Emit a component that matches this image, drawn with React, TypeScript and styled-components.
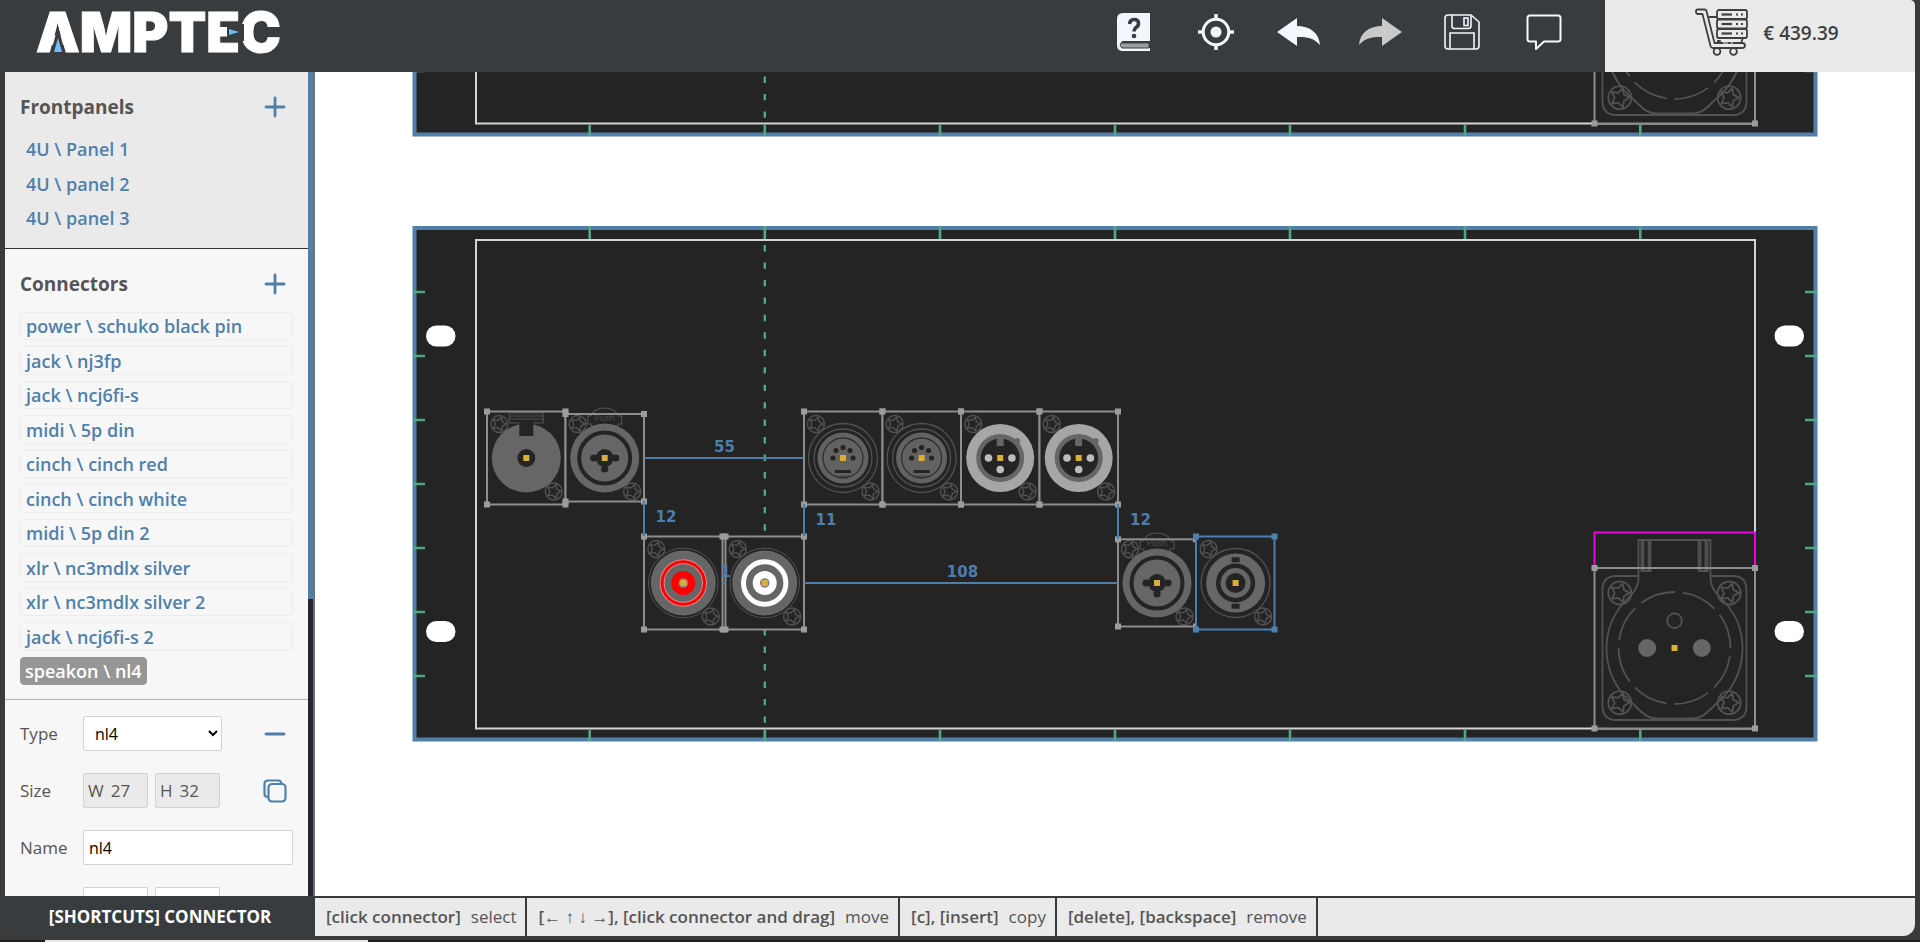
import React from 'react';
import styled, { createGlobalStyle, css } from 'styled-components';

const color = {
  chrome: '#393c3f',
  frame: '#3b3b3b',
  grey: '#eaeaea',
  pale: '#f7f7f7',
  blue: '#5080aa',
  text: '#555555',
  panel: '#242424',
  metal: '#666666',
  line: '#525252',
  green: '#4fa783',
  box: '#8e8e8e',
  handle: '#9a9da0',
  measure: '#4c7ead',
};

const GlobalStyle = createGlobalStyle`
  * { box-sizing: border-box; }
  body {
    margin: 0;
    background: ${color.frame};
    color: ${color.text};
    font-family: "Open Sans", "Noto Sans", sans-serif;
    font-size: 16px;
  }
  button, input, select { font: inherit; color: inherit; }
  button { border: 0; padding: 0; background: none; cursor: pointer; }
`;

const Shell = styled.div`
  height: 100vh;
  display: flex;
  flex-direction: column;
`;

const Window = styled.div`
  flex: 1;
  min-height: 0;
  display: flex;
  flex-direction: column;
  margin: 0 5px 4px;
  border-radius: 0 5px 12px 12px;
  overflow: hidden;
  background: ${color.chrome};
`;

const Header = styled.header`
  flex: none;
  height: 72px;
  display: flex;
  align-items: stretch;
`;

const LogoLink = styled.a`
  padding-left: 31px;
  display: block;
  margin-right: auto;
`;

const Toolbar = styled.nav`
  display: flex;
  padding-right: 20px;
`;

const ToolButton = styled.button<{ $dim?: boolean }>`
  width: 82px;
  height: 64px;
  display: flex;
  align-items: center;
  justify-content: center;
  color: ${p => (p.$dim ? '#c9c9c9' : '#f1f7fd')};
`;

const CartButton = styled.button`
  width: 310px;
  display: flex;
  align-items: flex-start;
  justify-content: center;
  gap: 14px;
  padding: 8px 0 0 14px;
  background: ${color.grey};
  color: #3d3f41;
`;

const Price = styled.span`
  font-size: 19px;
  line-height: 50px;
  font-weight: 600;
`;

const Body = styled.div`
  flex: 1;
  min-height: 0;
  display: flex;
`;

const Sidebar = styled.aside`
  flex: none;
  width: 310px;
  display: flex;
  overflow: hidden;
`;

const SidebarContent = styled.div`
  flex: 1;
  overflow: hidden;
  background: ${color.pale};
`;

const ScrollTrack = styled.div`
  width: 7px;
  background: #24282b;
  border-right: 2px solid #69747e;
`;

const ScrollThumb = styled.div`
  height: 64%;
  background: ${color.blue};
`;

const Section = styled.section<{ $shaded?: boolean }>`
  padding: 17px 15px 16px;
  ${p => p.$shaded
    ? css`background: ${color.grey}; border-bottom: 1px solid #333;`
    : css`padding-bottom: 14px; border-bottom: 1px solid #b4b4b4;`}
`;

const SectionHead = styled.div`
  height: 36px;
  margin-bottom: 10px;
  padding-right: 6px;
  display: flex;
  align-items: center;
  justify-content: space-between;
`;

const SectionTitle = styled.h2`
  margin: 0;
  font-size: 19px;
  font-weight: 700;
`;

const IconButton = styled.button`
  width: 24px;
  height: 24px;
  display: flex;
  align-items: center;
  justify-content: center;
  color: ${color.blue};
`;

const ItemList = styled.ul`
  margin: 0;
  padding: 0;
  list-style: none;
  display: flex;
  flex-direction: column;
  gap: 6px;
`;

const Item = styled.li`
  display: flex;
  min-height: 28px;
  &:nth-child(even) { min-height: 29px; }
`;

const ItemLink = styled.a<{ $boxed?: boolean; $active?: boolean }>`
  flex: 1;
  display: flex;
  align-items: center;
  padding: 0 5px;
  border: 1px solid ${p => (p.$boxed ? '#ececec' : 'transparent')};
  border-radius: 4px;
  color: ${color.blue};
  font-size: 18px;
  line-height: 24px;
  font-weight: 600;
  text-decoration: none;
  white-space: nowrap;
  ${p => p.$active && css`
    flex: none;
    padding: 0 4px;
    background: #969696;
    border-color: #969696;
    color: #fff;
  `}
`;

const Form = styled.form`
  padding: 16px 15px;
  display: flex;
  flex-direction: column;
  gap: 22px;
`;

const FormRow = styled.div`
  height: 35px;
  display: flex;
  align-items: center;
  padding-right: 6px;
`;

const Label = styled.label`
  width: 63px;
  flex: none;
  font-size: 17px;
`;

const Select = styled.select`
  width: 139px;
  height: 35px;
  padding: 0 0 0 7px;
  border: 1px solid #d2d2d2;
  border-radius: 2px;
  background: #fff;
  color: #000;
`;

const NameInput = styled.input`
  flex: 1;
  min-width: 0;
  height: 35px;
  margin-right: -6px;
  padding: 0 5px;
  border: 1px solid #d2d2d2;
  border-radius: 2px;
  color: #000;
`;

const Pair = styled.div`
  display: flex;
  gap: 7px;
`;

const SizeField = styled.label<{ $editable?: boolean }>`
  width: 65px;
  height: 35px;
  display: flex;
  align-items: center;
  padding: 0 4px;
  gap: 7px;
  border: 1px solid #d2d2d2;
  border-radius: 2px;
  background: ${p => (p.$editable ? '#fff' : color.grey)};
  font-size: 17px;
`;

const SizeInput = styled.input`
  flex: 1;
  min-width: 0;
  width: 100%;
  padding: 0;
  border: 0;
  background: none;
`;

const RowEnd = styled.div`
  margin-left: auto;
`;

const Canvas = styled.main`
  flex: 1;
  min-width: 0;
  overflow: hidden;
  display: flex;
  flex-direction: column;
  justify-content: flex-end;
  gap: 89px;
  padding: 0 97px 154px;
  background: #fff;
`;

const PanelSvg = styled.svg`
  display: block;
  flex: none;
  width: 100%;
  height: auto;
`;

const Footer = styled.footer`
  flex: none;
  height: 40px;
  display: flex;
`;

const FooterTitle = styled.div`
  flex: none;
  width: 310px;
  display: flex;
  align-items: center;
  justify-content: center;
  color: #fff;
  font-size: 17px;
  font-weight: 700;
`;

const ShortcutBar = styled.div`
  flex: 1;
  display: flex;
  border-top: 2px solid ${color.frame};
  background: ${color.grey};
`;

const Shortcut = styled.div`
  display: flex;
  align-items: center;
  gap: 10px;
  padding: 0 9px 2px 11px;
  border-right: 2px solid ${color.frame};
  white-space: nowrap;
  font-size: 17px;
`;

const Keys = styled.strong`
  font-weight: 600;
`;

const Taskbar = styled.div`
  flex: none;
  height: 2px;
  display: flex;
  padding-left: 45px;
  background: #1f1f1f;
`;

const ActiveTask = styled.div`
  width: 323px;
  background: #e6e6e6;
`;

function Logo() {
  return (
    <svg width="260" height="72" viewBox="0 0 260 72" role="img" aria-label="Amptec">
      <text x="0" y="52" fontFamily="Inter, sans-serif" fontSize="55" fontWeight="900" fill="#fff" stroke="#fff" strokeWidth="1">AMPTEC</text>
      <path d="M14.500 54 L22 26 L29.500 54Z" fill={color.chrome} />
      <path d="M18 52 L22 38 L26 52Z" fill="#6fbdf5" />
      <path d="M191 24H208V41H191Z" fill={color.chrome} />
      <path d="M193 29 L203 32 L193 35Z" fill="#6fbdf5" />
    </svg>
  );
}

const BookIcon = () => (
  <svg width="34" height="38" viewBox="0 0 34 38">
    <path d="M6 0H33V28H6C3 28 3 35 6 35H33V38H6Q0 38 0 32V6Q0 0 6 0Z" fill="currentColor" />
    <path d="M4 30H32V35H5Q2 32.500 4 30Z" fill="#9aa0a4" stroke={color.chrome} />
    <path d="M12.500 11 Q13 6.500 17 6.500 Q21.500 6.500 21.500 10.500 Q21.500 13 19 14.500 Q17 16 17 18.500" fill="none" stroke={color.chrome} strokeWidth="3.600" />
    <circle cx="17" cy="23" r="2.300" fill={color.chrome} />
  </svg>
);

const TargetIcon = () => (
  <svg width="36" height="36" viewBox="0 0 36 36" fill="none" stroke="currentColor">
    <circle cx="18" cy="18" r="12.800" strokeWidth="3" />
    <circle cx="18" cy="18" r="5.500" fill="currentColor" stroke="none" />
    <path d="M18 0V6M18 30V36M0 18H6M30 18H36" strokeWidth="3.500" />
  </svg>
);

const ArrowIcon = ({ flip }: { flip?: boolean }) => (
  <svg width="43" height="28" viewBox="0 0 43 28">
    <path transform={flip ? 'matrix(-1 0 0 1 43 0)' : undefined}
      d="M0 14 L20 0 V8 C32 8 42 14 43 27 C37 20 30 18.500 20 19 V28Z" fill="currentColor" />
  </svg>
);

const FloppyIcon = () => (
  <svg width="36" height="36" viewBox="0 0 36 36" fill="none" stroke="currentColor" strokeWidth="1.600">
    <path d="M4 1H27L35 8V32Q35 35 32 35H4Q1 35 1 32V4Q1 1 4 1Z" />
    <path d="M8 1V12Q8 14.500 10.500 14.500H24Q27 14.500 27 12V1M6 35V19H30V35" />
    <rect x="20" y="4" width="4" height="7.500" />
  </svg>
);

const ChatIcon = () => (
  <svg width="36" height="36" viewBox="0 0 36 36" fill="none" stroke="currentColor" strokeWidth="2" strokeLinejoin="round">
    <path d="M4 1.500H32Q34.500 1.500 34.500 4V25Q34.500 27.500 32 27.500H18L10 35V27.500H4Q1.500 27.500 1.500 25V4Q1.500 1.500 4 1.500Z" />
  </svg>
);

const CartIcon = () => (
  <svg width="54" height="48" viewBox="0 0 54 48" fill="none" stroke="currentColor" strokeWidth="1.800" strokeLinejoin="round">
    <path d="M2.500 1.500H9.500Q11 1.500 11.500 3L19.500 35H47Q50 35 50 37.500Q50 40 47 40H18Q16 40 15.500 38L7.500 6H3Q1 6 1 3.800Q1 1.500 2.500 1.500Z" />
    <path d="M13 9H22M46 35L48 30M25 35V33H22" />
    {[2, 11.5, 21].map(y => (
      <g key={y}>
        <rect x="22" y={y} width="30" height="9" rx="2" />
        <path d={`M26.500 ${y + 4.5}H37`} strokeWidth="2.200" />
        <path d={`M41 ${y + 4.5}h2M46 ${y + 4.5}h2`} strokeWidth="2.200" />
      </g>
    ))}
    <path d="M28 35H33M35.500 35H38" stroke="#eaeaea" strokeWidth="1" />
    <circle cx="22" cy="43.500" r="3.400" />
    <circle cx="38.500" cy="43.500" r="3.400" />
  </svg>
);

const PlusIcon = () => (
  <svg width="22" height="22" viewBox="0 0 22 22" stroke="currentColor" strokeWidth="2.800" strokeLinecap="round">
    <path d="M2 11H20M11 2V20" />
  </svg>
);

const MinusIcon = () => (
  <svg width="22" height="22" viewBox="0 0 22 22" stroke="currentColor" strokeWidth="2.800" strokeLinecap="round">
    <path d="M2 11H20" />
  </svg>
);

const CopyIcon = () => (
  <svg width="24" height="24" viewBox="0 0 24 24" fill="none" stroke="currentColor" strokeWidth="2.200">
    <rect x="5.500" y="5" width="17" height="17.500" rx="3.500" />
    <path d="M5 18C2.500 18 1.500 17 1.500 15V5Q1.500 1.500 5 1.500H15Q18 1.500 18.500 4.500" />
  </svg>
);

/* Drawing of the rack panels, in canvas units */

const starPath = (r: number) => {
  const pts: string[] = [];
  for (let i = 0; i < 10; i++) {
    const radius = i % 2 ? r * 0.45 : r * 0.86;
    const a = (Math.PI / 5) * i - Math.PI / 2 + 0.3;
    pts.push(`${(Math.cos(a) * radius).toFixed(2)},${(Math.sin(a) * radius).toFixed(2)}`);
  }
  return `M${pts.join('L')}Z`;
};

const Screw = ({ x, y, r = 8.5 }: { x: number; y: number; r?: number }) => (
  <g transform={`translate(${x} ${y})`} fill="none" stroke={color.line} strokeWidth={r > 10 ? 1.8 : 1.4} strokeLinejoin="round">
    <circle r={r} />
    <path d={starPath(r)} />
  </g>
);

const Centre = () => <rect x={-3} y={-3} width={6} height={6} fill="#d9af38" />;

const JackNj = () => (
  <g>
    <path d="M-17 -45H17V-35H-17ZM-17 -42H17M-17 -39H17" fill="none" stroke={color.line} />
    <circle r={34.5} fill={color.metal} />
    <rect x={-7} y={-37} width={14} height={15} fill={color.panel} />
    <circle r={9} fill={color.panel} />
  </g>
);

const JackCombo = () => (
  <g>
    <path d="M-13 -31V-34H-17V-42H-14Q-10 -50 0 -50Q10 -50 14 -42H17V-34H13V-31" fill={color.panel} stroke={color.line} strokeWidth={1.2} />
    <text y={-37.5} textAnchor="middle" fontSize={9} fontFamily="Open Sans, sans-serif" fill={color.line}>Push</text>
    <circle r={34.5} fill={color.metal} />
    <circle r={25.5} fill="none" stroke={color.panel} strokeWidth={4} />
    <circle r={9} fill={color.panel} />
    <circle cx={-11} r={3.6} fill={color.panel} />
    <circle cx={11} r={3.6} fill={color.panel} />
    <circle cy={11} r={3.6} fill={color.panel} />
  </g>
);

const Midi = () => (
  <g>
    <circle r={34.5} fill="none" stroke={color.line} strokeWidth={1.3} />
    <circle r={29} fill="none" stroke={color.line} strokeWidth={1.3} />
    <circle r={25.5} fill="#626262" />
    <circle r={20} fill="none" stroke="#2d2d2d" strokeWidth={1.3} />
    {[[-10, 0], [10, 0], [-7, -7.5], [7, -7.5], [0, -10.5]].map(([x, y]) => (
      <circle key={`${x}${y}`} cx={x} cy={y} r={2.6} fill={color.panel} />
    ))}
    <path d="M-8 13.500H8" stroke={color.panel} strokeWidth={3} />
    <path d="M-8 18H-5Q-4 19 0 18Q4 19 5 18H8" fill="none" stroke="#3a3a3a" />
  </g>
);

const Xlr = () => (
  <g>
    <circle r={34} fill="#a6a6a6" />
    <circle r={24} fill={color.metal} />
    <circle cx={17} cy={-17} r={3} fill={color.metal} />
    <circle r={19.5} fill={color.panel} />
    <rect x={-3.5} y={-21} width={7} height={9} fill={color.metal} />
    {[[-11.7, 0], [11.7, 0], [0, 11.5]].map(([x, y]) => (
      <circle key={x} cx={x} cy={y} r={3.8} fill="#bdbdbd" />
    ))}
  </g>
);

const Cinch = ({ tone }: { tone: 'red' | 'white' }) => (
  <g>
    <circle r={34.8} fill="none" stroke={color.line} />
    <circle r={32.5} fill={color.metal} />
    {tone === 'red' && <circle r={21.2} fill="none" stroke="#d98b8b" strokeWidth={5} />}
    <circle r={21.2} fill="none" stroke={tone === 'red' ? '#ff0000' : '#fff'} strokeWidth={tone === 'red' ? 3 : 5} />
    <circle r={12} fill={tone === 'red' ? '#ff0000' : '#fff'} />
    <circle r={4.8} fill="#858585" />
  </g>
);

const Speakon = () => (
  <g>
    <circle r={34.5} fill="none" stroke={color.line} strokeWidth={1.3} />
    <circle r={29.5} fill="#676767" />
    <circle r={19.6} fill={color.panel} />
    <circle r={15} fill={color.metal} />
    <circle r={10} fill={color.panel} />
    <path d="M-4 -23.300H4M-4 23.300H4" stroke={color.panel} strokeWidth={5} />
  </g>
);

const Schuko = () => (
  <g fill="none" stroke={color.line} strokeWidth={1.8}>
    <path d="M-36 -72H-58Q-72 -72 -72 -58V58Q-72 72 -58 72H58Q72 72 72 58V-58Q72 -72 58 -72H36" />
    <path d="M-36 -70V-108H36V-70C36 -60 42 -54 50 -46C74 -20 74 20 50 48L33 64Q26 70.500 18 70.500H-18Q-26 70.500 -33 64L-50 48C-74 20 -74 -20 -50 -46C-42 -54 -36 -60 -36 -70" />
    <path d="M-33 -108V-77H-24V-108M-31 -108V-77M-26 -108V-77M33 -108V-77H24V-108M31 -108V-77M26 -108V-77" />
    <circle r={56} strokeDasharray="36 7.980" strokeDashoffset={36} />
    <circle cy={-27.3} r={7.3} />
    <circle cx={-27.3} r={9} fill={color.metal} stroke="none" />
    <circle cx={27.3} r={9} fill={color.metal} stroke="none" />
    {[-54.7, 54.7].map(x => [-55, 54.7].map(y => <Screw key={`${x}${y}`} x={x} y={y} r={11.5} />))}
  </g>
);

type Device = {
  id: string;
  box: [number, number, number, number];
  at: [number, number];
  art: React.ReactNode;
  selected?: boolean;
  plain?: boolean;
};

const schuko: Device = { id: 'schuko', box: [1594.5, 568, 1755, 728.5], at: [1674.5, 648], art: <Schuko />, plain: true };

const devices: Device[] = [
  { id: 'nj3fp', box: [487, 411.5, 565.5, 504.5], at: [526.3, 458], art: <JackNj /> },
  { id: 'ncj6', box: [565.5, 414, 644, 501.5], at: [604.7, 458], art: <JackCombo /> },
  { id: 'midi', box: [804, 411.5, 882.5, 504.5], at: [843, 458], art: <Midi /> },
  { id: 'midi2', box: [882.5, 411.5, 961, 504.5], at: [921.6, 458], art: <Midi /> },
  { id: 'xlr', box: [961, 411.5, 1039.5, 504.5], at: [1000.2, 458], art: <Xlr /> },
  { id: 'xlr2', box: [1039.5, 411.5, 1118, 504.5], at: [1078.7, 458], art: <Xlr /> },
  { id: 'cinch', box: [644, 536.5, 722.5, 629.5], at: [683.3, 583], art: <Cinch tone="red" /> },
  { id: 'cinch2', box: [725.5, 536.5, 804, 629.5], at: [764.7, 583], art: <Cinch tone="white" /> },
  { id: 'ncj62', box: [1118, 539.3, 1196, 626.5], at: [1157, 583], art: <JackCombo /> },
  { id: 'nl4', box: [1196, 536.5, 1274.5, 629.5], at: [1235.6, 583], art: <Speakon />, selected: true },
  schuko,
];

function DeviceShape({ device }: { device: Device }) {
  const [l, t, r, b] = device.box;
  const edge = device.selected ? color.measure : color.box;
  return (
    <g>
      <rect x={l} y={t} width={r - l} height={b - t} fill={color.panel} />
      {device.plain && <path d={`M${l} ${t}V532.500H${r}V${t}`} fill="none" stroke="#f000e0" strokeWidth={2} />}
      <g transform={`translate(${device.at[0]} ${device.at[1]})`}>
        {!device.plain && <><Screw x={-27} y={-34} /><Screw x={27.5} y={33.5} /></>}
        {device.art}
        <Centre />
      </g>
      <rect x={l} y={t} width={r - l} height={b - t} fill="none" stroke={edge} strokeWidth={2} />
      {[l, r].map(x => [t, b].map(y => (
        <rect key={`${x}-${y}`} x={x - 3} y={y - 3} width={6} height={6} fill={device.selected ? color.blue : color.handle} />
      )))}
    </g>
  );
}

const measures: { path: string; label: string; x: number; y: number }[] = [
  { path: 'M644 458H804', label: '55', x: 724.5, y: 452 },
  { path: 'M644 501V536', label: '12', x: 666, y: 522 },
  { path: 'M804 504V536', label: '11', x: 826, y: 525 },
  { path: 'M804 583H1118', label: '108', x: 962.5, y: 577 },
  { path: 'M1118 504V539', label: '12', x: 1140.5, y: 525 },
  { path: 'M722 583H726', label: '1', x: 725.5, y: 577 },
];

const columns = [589.7, 764.8, 940, 1115, 1290, 1465, 1640.3];
const rows = [292, 356, 420, 484, 548, 612, 676];

function Panel({ items, showMeasures, label }: { items: Device[]; showMeasures?: boolean; label: string }) {
  return (
    <PanelSvg viewBox="412 226 1406 516" role="img" aria-label={label}>
      <rect x={414.5} y={228} width={1401} height={511.5} fill={color.panel} stroke={color.blue} strokeWidth={4} />
      {[426, 1774.5].map(x => [325.5, 621].map(y => (
        <rect key={`${x}-${y}`} x={x} y={y} width={29.5} height={21} rx={10.5} fill="#fff" />
      )))}
      <path d={columns.map(x => `M${x} 226V239M${x} 730V741`).join('')} stroke={color.green} strokeWidth={2.6} />
      <path d={rows.map(y => `M413 ${y}H425M1805 ${y}H1817`).join('')} stroke={color.green} strokeWidth={2.6} />
      <rect x={476} y={240} width={1279} height={488.5} fill="none" stroke="#d6d3d3" strokeWidth={2} />
      <path d="M764.800 245V730" stroke={color.green} strokeWidth={2.4} strokeDasharray="6.400 11.060" />
      {items.map(d => <DeviceShape key={d.id} device={d} />)}
      {showMeasures && measures.map(m => (
        <g key={m.path}>
          <path d={m.path} stroke={color.measure} strokeWidth={2} />
          <text x={m.x} y={m.y} textAnchor="middle" fill={color.measure} fontFamily="DejaVu Sans, sans-serif" fontSize={15} fontWeight={700}>{m.label}</text>
        </g>
      ))}
    </PanelSvg>
  );
}

const frontpanels = ['4U \\ Panel 1', '4U \\ panel 2', '4U \\ panel 3'];
const connectors = [
  'power \\ schuko black pin', 'jack \\ nj3fp', 'jack \\ ncj6fi-s', 'midi \\ 5p din',
  'cinch \\ cinch red', 'cinch \\ cinch white', 'midi \\ 5p din 2', 'xlr \\ nc3mdlx silver',
  'xlr \\ nc3mdlx silver 2', 'jack \\ ncj6fi-s 2', 'speakon \\ nl4',
];
const shortcuts = [
  ['[click connector]', 'select'],
  ['[← ↑ ↓ →], [click connector and drag]', 'move'],
  ['[c], [insert]', 'copy'],
  ['[delete], [backspace]', 'remove'],
];

export default function App() {
  return (
    <Shell>
      <GlobalStyle />
      <Window>
        <Header>
          <LogoLink href="#home"><Logo /></LogoLink>
          <Toolbar aria-label="Tools">
            <ToolButton aria-label="Manual"><BookIcon /></ToolButton>
            <ToolButton aria-label="Centre view"><TargetIcon /></ToolButton>
            <ToolButton aria-label="Undo"><ArrowIcon /></ToolButton>
            <ToolButton aria-label="Redo" $dim><ArrowIcon flip /></ToolButton>
            <ToolButton aria-label="Save"><FloppyIcon /></ToolButton>
            <ToolButton aria-label="Comment"><ChatIcon /></ToolButton>
          </Toolbar>
          <CartButton><CartIcon /><Price>€ 439.39</Price></CartButton>
        </Header>
        <Body>
          <Sidebar>
            <SidebarContent>
              <Section $shaded>
                <SectionHead>
                  <SectionTitle>Frontpanels</SectionTitle>
                  <IconButton aria-label="Add frontpanel"><PlusIcon /></IconButton>
                </SectionHead>
                <ItemList>
                  {frontpanels.map(name => (
                    <Item key={name}><ItemLink href="#panel">{name}</ItemLink></Item>
                  ))}
                </ItemList>
              </Section>
              <Section>
                <SectionHead>
                  <SectionTitle>Connectors</SectionTitle>
                  <IconButton aria-label="Add connector"><PlusIcon /></IconButton>
                </SectionHead>
                <ItemList>
                  {connectors.map((name, i) => (
                    <Item key={name}>
                      <ItemLink href="#connector" $boxed $active={i === connectors.length - 1}>{name}</ItemLink>
                    </Item>
                  ))}
                </ItemList>
              </Section>
              <Form>
                <FormRow>
                  <Label htmlFor="type">Type</Label>
                  <Select id="type" defaultValue="nl4"><option>nl4</option></Select>
                  <RowEnd><IconButton type="button" aria-label="Remove connector"><MinusIcon /></IconButton></RowEnd>
                </FormRow>
                <FormRow>
                  <Label as="span">Size</Label>
                  <Pair>
                    <SizeField>W <SizeInput defaultValue="27" readOnly /></SizeField>
                    <SizeField>H <SizeInput defaultValue="32" readOnly /></SizeField>
                  </Pair>
                  <RowEnd><IconButton type="button" aria-label="Copy connector"><CopyIcon /></IconButton></RowEnd>
                </FormRow>
                <FormRow>
                  <Label htmlFor="name">Name</Label>
                  <NameInput id="name" defaultValue="nl4" />
                </FormRow>
                <FormRow>
                  <Label as="span">Place</Label>
                  <Pair>
                    <SizeField $editable><SizeInput aria-label="Horizontal place" /></SizeField>
                    <SizeField $editable><SizeInput aria-label="Vertical place" /></SizeField>
                  </Pair>
                </FormRow>
              </Form>
            </SidebarContent>
            <ScrollTrack><ScrollThumb /></ScrollTrack>
          </Sidebar>
          <Canvas>
            <Panel items={[schuko]} label="Panel 2" />
            <Panel items={devices} showMeasures label="Panel 3" />
          </Canvas>
        </Body>
        <Footer>
          <FooterTitle>[SHORTCUTS] CONNECTOR</FooterTitle>
          <ShortcutBar>
            {shortcuts.map(([keys, action]) => (
              <Shortcut key={action}><Keys>{keys}</Keys><span>{action}</span></Shortcut>
            ))}
          </ShortcutBar>
        </Footer>
      </Window>
      <Taskbar><ActiveTask /></Taskbar>
    </Shell>
  );
}
